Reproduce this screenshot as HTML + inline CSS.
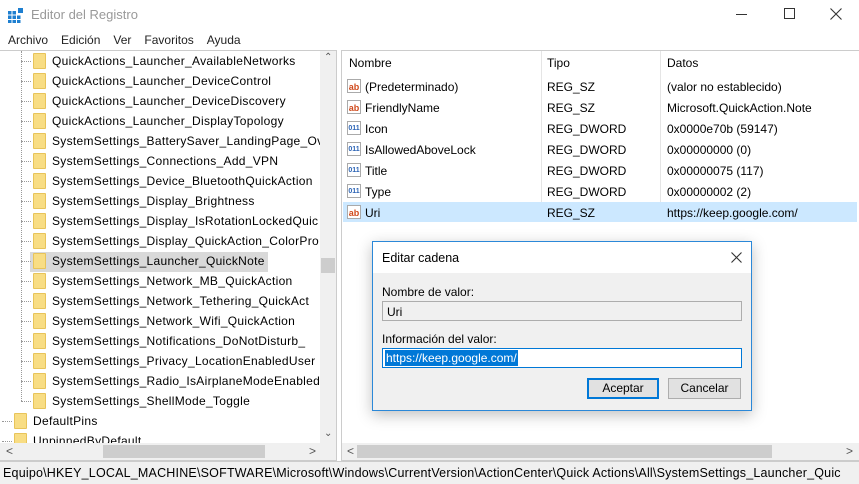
<!DOCTYPE html>
<html><head><meta charset="utf-8"><style>
*{margin:0;padding:0;box-sizing:border-box}
body{width:859px;height:484px;overflow:hidden;background:#fff;font-family:"Liberation Sans",sans-serif;font-size:12px;color:#000;position:relative}
.abs{position:absolute;white-space:nowrap}
.title{left:31px;top:7px;font-size:13px;color:#999}
.menu span{margin-right:13px}
.fold{position:absolute;width:13px;height:16px;background:#f8dd84;border:1px solid #e8c45a;border-radius:1px}
.row{position:absolute;left:52px;height:20px;line-height:20px;letter-spacing:0.3px}
.dots{position:absolute;border-top:1px dotted #999;width:10px}
.ic{position:absolute;left:347px;width:14px;height:14px;font-size:9px;font-weight:bold;line-height:14px;text-align:center;border:1px solid #aaa;background:#fff}
.ab{color:#d04a1c}
.bin{color:#2b63b5;font-size:7px}
</style></head><body>
<svg class="abs" style="left:8px;top:7px" width="16" height="16"><rect x="0" y="4" width="3.5" height="3.5" fill="#1e7fd0"/><rect x="4.5" y="4" width="3.5" height="3.5" fill="#1e7fd0"/><rect x="0" y="8.5" width="3.5" height="3.5" fill="#1e7fd0"/><rect x="4.5" y="8.5" width="3.5" height="3.5" fill="#1e7fd0"/><rect x="9" y="8.5" width="3.5" height="3.5" fill="#1e7fd0"/><rect x="0" y="13" width="3.5" height="3" fill="#1e7fd0"/><rect x="4.5" y="13" width="3.5" height="3" fill="#1e7fd0"/><rect x="9" y="13" width="3.5" height="3" fill="#1e7fd0"/><rect x="10" y="1" width="5" height="5" fill="#1e7fd0"/></svg>
<div class="abs title">Editor del Registro</div>
<div class="abs" style="left:736px;top:14px;width:11px;border-top:1px solid #333"></div>
<div class="abs" style="left:784px;top:8px;width:11px;height:11px;border:1px solid #333"></div>
<svg class="abs" style="left:830px;top:8px" width="12" height="12"><path d="M0.5 0.5L11.5 11.5M11.5 0.5L0.5 11.5" stroke="#333" stroke-width="1.1"/></svg>
<div class="abs menu" style="left:8px;top:33px;font-size:12px;color:#222"><span>Archivo</span><span>Edición</span><span>Ver</span><span>Favoritos</span><span>Ayuda</span></div>
<div class="abs" style="left:0;top:50px;width:337px;height:411px;border:1px solid #ccc;border-left:none;overflow:hidden">
<div class="abs" style="left:30px;top:201px;width:238px;height:20px;background:#d9d9d9"></div>
</div>
<div id="tree"></div>
<div class="abs" style="left:320px;top:51px;width:16px;height:392px;background:#f0f0f0"></div>
<div class="abs" style="left:324px;top:52px;font-size:10px;color:#555">⌃</div>
<div class="abs" style="left:324px;top:428px;font-size:10px;color:#555">⌄</div>
<div class="abs" style="left:321px;top:258px;width:14px;height:15px;background:#cdcdcd"></div>
<div class="abs" style="left:0;top:443px;width:336px;height:17px;background:#f0f0f0"></div>
<div class="abs" style="left:103px;top:445px;width:162px;height:13px;background:#cdcdcd"></div>
<div class="abs" style="left:6px;top:444px;color:#555">&lt;</div>
<div class="abs" style="left:309px;top:444px;color:#555">&gt;</div>
<div class="abs" style="left:341px;top:50px;width:518px;height:411px;border:1px solid #ccc;border-right:none"></div>
<div class="abs" style="left:541px;top:51px;height:170px;border-left:1px solid #e5e5e5"></div>
<div class="abs" style="left:660px;top:51px;height:170px;border-left:1px solid #e5e5e5"></div>
<div class="abs" style="left:343px;top:202px;width:514px;height:20px;background:#cce8ff"></div>
<div class="abs" style="left:349px;top:56px">Nombre</div>
<div class="abs" style="left:547px;top:56px">Tipo</div>
<div class="abs" style="left:667px;top:56px">Datos</div>
<div id="vals"></div>
<div class="abs" style="left:342px;top:443px;width:517px;height:17px;background:#f0f0f0"></div>
<div class="abs" style="left:357px;top:445px;width:415px;height:13px;background:#cdcdcd"></div>
<div class="abs" style="left:347px;top:444px;color:#555">&lt;</div>
<div class="abs" style="left:846px;top:444px;color:#555">&gt;</div>
<div class="abs" style="left:0;top:461px;width:859px;height:23px;background:#f0f0f0;border-top:1px solid #ccc"></div>
<div class="abs" style="left:3px;top:466px;font-size:12.5px;letter-spacing:0.2px">Equipo\HKEY_LOCAL_MACHINE\SOFTWARE\Microsoft\Windows\CurrentVersion\ActionCenter\Quick Actions\All\SystemSettings_Launcher_Quic</div>
<div class="abs" style="left:372px;top:241px;width:380px;height:170px;border:1px solid #2b88d8;background:#f0f0f0;box-shadow:0 4px 14px rgba(0,0,0,.25)">
<div style="position:absolute;left:0;top:0;width:378px;height:31px;background:#fff"></div>
<div class="abs" style="left:9px;top:9px;font-size:12.5px">Editar cadena</div>
<svg class="abs" style="left:358px;top:10px" width="11" height="11"><path d="M0.5 0.5L10.5 10.5M10.5 0.5L0.5 10.5" stroke="#333" stroke-width="1.1"/></svg>
<div class="abs" style="left:9px;top:43px">Nombre de valor:</div>
<div class="abs" style="left:9px;top:59px;width:360px;height:20px;border:1px solid #adadad;background:#f0f0f0;padding:3px 4px">Uri</div>
<div class="abs" style="left:9px;top:90px">Información del valor:</div>
<div class="abs" style="left:9px;top:106px;width:360px;height:20px;border:1px solid #0078d7;background:#fff;padding:2px 2px"><span style="background:#0078d7;color:#fff;padding:1px 1px">https://keep.google.com/</span></div>
<div class="abs" style="left:214px;top:136px;width:72px;height:21px;border:2px solid #0078d7;background:#e1e1e1;text-align:center;line-height:17px">Aceptar</div>
<div class="abs" style="left:295px;top:136px;width:73px;height:21px;border:1px solid #adadad;background:#e1e1e1;text-align:center;line-height:19px">Cancelar</div>
</div>
<script>
var t=["QuickActions_Launcher_AvailableNetworks","QuickActions_Launcher_DeviceControl","QuickActions_Launcher_DeviceDiscovery","QuickActions_Launcher_DisplayTopology","SystemSettings_BatterySaver_LandingPage_Ov","SystemSettings_Connections_Add_VPN","SystemSettings_Device_BluetoothQuickAction","SystemSettings_Display_Brightness","SystemSettings_Display_IsRotationLockedQuic","SystemSettings_Display_QuickAction_ColorPro","SystemSettings_Launcher_QuickNote","SystemSettings_Network_MB_QuickAction","SystemSettings_Network_Tethering_QuickAct","SystemSettings_Network_Wifi_QuickAction","SystemSettings_Notifications_DoNotDisturb_","SystemSettings_Privacy_LocationEnabledUser","SystemSettings_Radio_IsAirplaneModeEnabled","SystemSettings_ShellMode_Toggle"];
var h="";
t.forEach(function(s,i){var y=51+i*20;h+='<div class="dots" style="left:21px;top:'+(y+10)+'px"></div><div class="fold" style="left:33px;top:'+(y+2)+'px"></div><div class="row" style="top:'+y+'px;width:268px;overflow:hidden">'+s+'</div>';});
h+='<div class="abs" style="left:21px;top:51px;height:350px;border-left:1px dotted #999"></div>';
[["DefaultPins",411],["UnpinnedByDefault",431]].forEach(function(a){h+='<div class="dots" style="left:2px;top:'+(a[1]+10)+'px"></div><div class="fold" style="left:14px;top:'+(a[1]+2)+'px"></div><div class="row" style="left:33px;top:'+a[1]+'px">'+a[0]+'</div>';});
document.getElementById("tree").outerHTML=h+'<div class="abs" style="left:0;top:443px;width:336px;height:17px;background:#f0f0f0"></div>';
var v=[["ab","(Predeterminado)","REG_SZ","(valor no establecido)"],["ab","FriendlyName","REG_SZ","Microsoft.QuickAction.Note"],["b","Icon","REG_DWORD","0x0000e70b (59147)"],["b","IsAllowedAboveLock","REG_DWORD","0x00000000 (0)"],["b","Title","REG_DWORD","0x00000075 (117)"],["b","Type","REG_DWORD","0x00000002 (2)"],["ab","Uri","REG_SZ","https://keep.google.com/"]];
var g="";
v.forEach(function(r,i){var y=78+i*21;g+='<div class="ic '+(r[0]=="ab"?"ab":"bin")+'" style="top:'+(y+1)+'px">'+(r[0]=="ab"?"ab":"011<br>")+'</div><div class="abs" style="left:365px;top:'+(y+2)+'px">'+r[1]+'</div><div class="abs" style="left:547px;top:'+(y+2)+'px">'+r[2]+'</div><div class="abs" style="left:667px;top:'+(y+2)+'px">'+r[3]+'</div>';});
document.getElementById("vals").outerHTML=g;
</script>
</body></html>
